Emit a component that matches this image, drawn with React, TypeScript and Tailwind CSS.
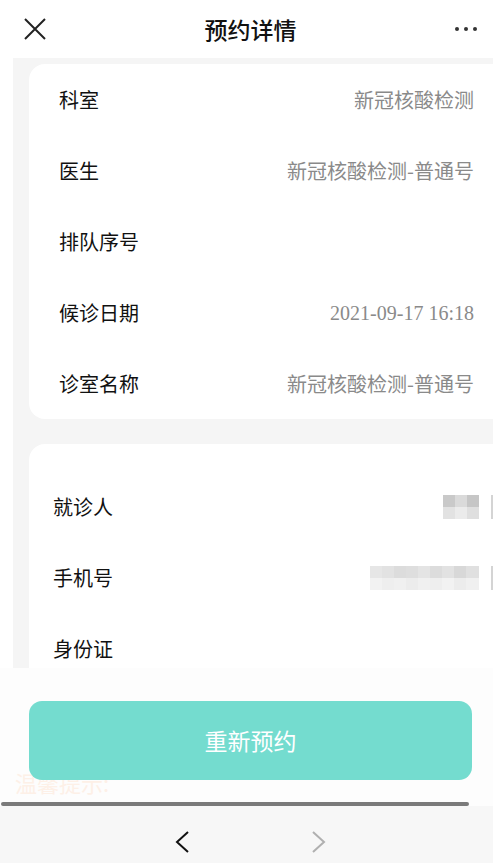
import React from "react";

const cjk = { fontFamily: '"Noto Sans CJK SC", "Noto Sans", sans-serif' };

function Row({ label, value, serif }: { label: string; value?: string; serif?: boolean }) {
  return (
    <div className="h-[71px] flex items-center justify-between">
      <span className="text-[20px] text-[#111]">{label}</span>
      {value && (
        <span
          className="text-[20px] text-[#8a8a8a]"
          style={serif ? { fontFamily: '"Liberation Serif", serif' } : undefined}
        >
          {value}
        </span>
      )}
    </div>
  );
}

function Mosaic({ cells, cols }: { cells: string[]; cols: string }) {
  return (
    <div className="flex items-center gap-[12px]">
      <div className={`grid ${cols} blur-[0.6px]`}>
        {cells.map((c, i) => (
          <div key={i} className="h-[12px]" style={{ background: c }} />
        ))}
      </div>
      <div className="w-[2px] h-[24px] bg-[#d4d4d4]" />
    </div>
  );
}

export default function App() {
  return (
    <div className="w-[493px] h-[863px] bg-white overflow-hidden flex flex-col" style={cjk}>
      {/* header */}
      <div className="h-[58px] flex items-center justify-between px-[24px] shrink-0">
        <svg width="22" height="22" viewBox="0 0 22 22">
          <path d="M1 1 L21 21 M21 1 L1 21" stroke="#222" strokeWidth="2" fill="none" />
        </svg>
        <span className="text-[23px] font-medium text-[#111]">预约详情</span>
        <div className="flex gap-[5px] mr-[-8px]">
          <span className="w-[4px] h-[4px] rounded-full bg-[#333]" />
          <span className="w-[4px] h-[4px] rounded-full bg-[#333]" />
          <span className="w-[4px] h-[4px] rounded-full bg-[#333]" />
        </div>
      </div>

      {/* content */}
      <div className="h-[610px] flex shrink-0">
        <div className="w-[13px] bg-white" />
        <div className="flex-1 bg-[#f5f5f5] pl-[16px] pt-[6px] flex flex-col gap-[25px] overflow-hidden">
          <div className="bg-white rounded-l-[16px] pl-[30px] pr-[19px]">
            <Row label="科室" value="新冠核酸检测" />
            <Row label="医生" value="新冠核酸检测-普通号" />
            <Row label="排队序号" />
            <Row label="候诊日期" value="2021-09-17 16:18" serif />
            <Row label="诊室名称" value="新冠核酸检测-普通号" />
          </div>
          <div className="bg-white rounded-tl-[16px] pl-[24px] pt-[27px] flex-1">
            <div className="h-[71px] flex items-center justify-between">
              <span className="text-[20px] text-[#111]">就诊人</span>
              <Mosaic
                cols="grid-cols-[12px_12px_12px]"
                cells={["#c9c9c9", "#dadada", "#c6c6c6", "#e2e2e2", "#ebebeb", "#dfdfdf"]}
              />
            </div>
            <div className="h-[71px] flex items-center justify-between">
              <span className="text-[20px] text-[#111]">手机号</span>
              <Mosaic
                cols="grid-cols-[12px_12px_12px_12px_12px_12px_12px_12px_13px]"
                cells={[
                  "#e6e6e6", "#e2e2e2", "#dcdcdc", "#dedede", "#e4e4e4", "#dcdcdc", "#e2e2e2", "#d8d8d8", "#e0e0e0",
                  "#f2f2f2", "#eeeeee", "#f0f0f0", "#ececec", "#f0f0f0", "#eeeeee", "#f2f2f2", "#ececec", "#f0f0f0",
                ]}
              />
            </div>
            <div className="h-[71px] flex items-center">
              <span className="text-[20px] text-[#111]">身份证</span>
            </div>
          </div>
        </div>
      </div>

      {/* footer overlay */}
      <div className="h-[138px] bg-[#fdfdfd] flex flex-col overflow-hidden shrink-0">
        <div className="pt-[33px] pl-[29px] pr-[21px]">
          <button className="relative z-10 w-full h-[79px] rounded-[13px] bg-[#74dccf] text-white text-[23px]">
            重新预约
          </button>
        </div>
        <div className="pl-[15px] -mt-[12px] text-[22px] leading-[28px] text-[#fdf0e7]">温馨提示:</div>
        <div className="mt-auto h-[4px] w-[468px] ml-[1px] rounded-full bg-[#7a7a7a]" />
      </div>

      {/* bottom nav */}
      <div className="flex-1 bg-[#f7f7f7] flex items-center justify-center gap-[121px] pt-[14px] pl-[8px]">
        <svg width="16" height="22" viewBox="0 0 16 22">
          <path d="M14 1 L3 11 L14 21" stroke="#111" strokeWidth="2" fill="none" />
        </svg>
        <svg width="16" height="22" viewBox="0 0 16 22">
          <path d="M2 1 L13 11 L2 21" stroke="#b0b0b0" strokeWidth="2" fill="none" />
        </svg>
      </div>
    </div>
  );
}
